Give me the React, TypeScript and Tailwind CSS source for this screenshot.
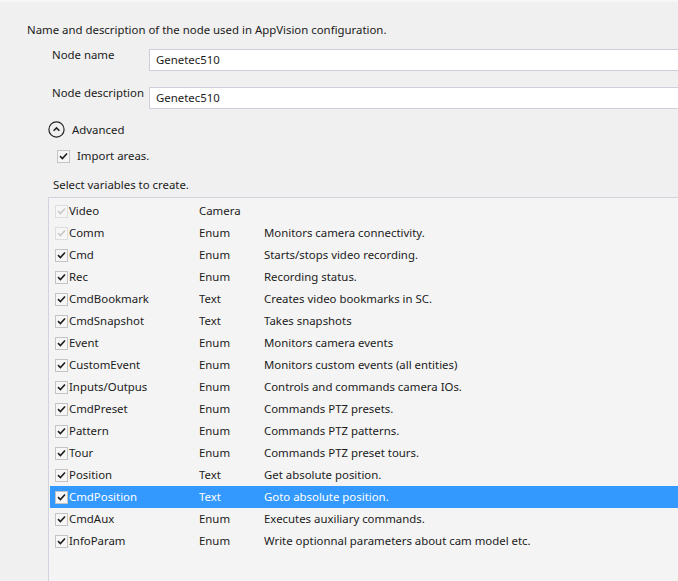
import React from "react";

type Variable = {
  name: string;
  type: string;
  description: string;
  locked?: boolean;
};

const variables: Variable[] = [
  { name: "Video", type: "Camera", description: "", locked: true },
  { name: "Comm", type: "Enum", description: "Monitors camera connectivity.", locked: true },
  { name: "Cmd", type: "Enum", description: "Starts/stops video recording." },
  { name: "Rec", type: "Enum", description: "Recording status." },
  { name: "CmdBookmark", type: "Text", description: "Creates video bookmarks in SC." },
  { name: "CmdSnapshot", type: "Text", description: "Takes snapshots" },
  { name: "Event", type: "Enum", description: "Monitors camera events" },
  { name: "CustomEvent", type: "Enum", description: "Monitors custom events (all entities)" },
  { name: "Inputs/Outpus", type: "Enum", description: "Controls and commands camera IOs." },
  { name: "CmdPreset", type: "Enum", description: "Commands PTZ presets." },
  { name: "Pattern", type: "Enum", description: "Commands PTZ patterns." },
  { name: "Tour", type: "Enum", description: "Commands PTZ preset tours." },
  { name: "Position", type: "Text", description: "Get absolute position." },
  { name: "CmdPosition", type: "Text", description: "Goto absolute position." },
  { name: "CmdAux", type: "Enum", description: "Executes auxiliary commands." },
  { name: "InfoParam", type: "Enum", description: "Write optionnal parameters about cam model etc." },
];

function CheckBox({ disabled }: { disabled?: boolean }) {
  return (
    <span
      className={
        disabled
          ? "flex h-[13px] w-[13px] shrink-0 items-center justify-center border border-[#dedede] bg-[#f6f6f6]"
          : "flex h-[13px] w-[13px] shrink-0 items-center justify-center border border-[#c4c4c4] bg-[#f6f6f6]"
      }
    >
      <svg width="9" height="8" viewBox="0 0 9 8" fill="none">
        <path
          d="M1 4.2 L3.4 6.5 L8 1.5"
          stroke={disabled ? "#c8c8c8" : "#1e1e1e"}
          strokeWidth="1.6"
        />
      </svg>
    </span>
  );
}

function AdvancedIcon() {
  return (
    <svg width="17" height="17" viewBox="0 0 17 17" fill="none">
      <circle cx="8.5" cy="8.5" r="7.6" stroke="#222" strokeWidth="1.2" />
      <path d="M5.6 9.8 L8.5 6.9 L11.4 9.8" stroke="#222" strokeWidth="1.6" />
    </svg>
  );
}

export default function App() {
  const selected = "CmdPosition";
  return (
    <div
      className="relative h-[581px] w-[678px] overflow-hidden whitespace-nowrap bg-[#f0f0f0] text-[11.4px] leading-[16px] text-[#1b1b1b]"
      style={{ fontFamily: '"Noto Sans", "Open Sans", sans-serif' }}
    >
      <div className="h-[2px] bg-[#f6f6f6]" />
      <div className="pl-[27px] pt-[20px]">
        Name and description of the node used in AppVision configuration.
      </div>

      <div className="mt-[9px] flex pl-[52px]">
        <div className="w-[97px] shrink-0">Node name</div>
        <div className="mt-[2px] flex h-[22px] w-[560px] shrink-0 items-center border border-[#cfcfdc] bg-white pl-[6px]">
          Genetec510
        </div>
      </div>
      <div className="mt-[14px] flex pl-[52px]">
        <div className="w-[97px] shrink-0">Node description</div>
        <div className="mt-[2px] flex h-[22px] w-[560px] shrink-0 items-center border border-[#cfcfdc] bg-white pl-[6px]">
          Genetec510
        </div>
      </div>

      <div className="mt-[12px] flex items-center pl-[48px]">
        <AdvancedIcon />
        <span className="ml-[7px]">Advanced</span>
      </div>

      <div className="mt-[10px] flex items-center pl-[57px]">
        <CheckBox />
        <span className="ml-[7px]">Import areas.</span>
      </div>

      <div className="mt-[13px] pl-[53px]">Select variables to create.</div>

      <div className="ml-[48px] mt-[4px] h-[400px] w-[700px] border border-[#d3d3de] bg-[#f4f4f4] pl-[1px] pt-[2px]">
        {variables.map((v) => {
          const isSel = v.name === selected;
          return (
            <div
              key={v.name}
              className={
                isSel
                  ? "flex h-[22px] items-center bg-[#3399ff] text-white"
                  : "flex h-[22px] items-center"
              }
            >
              <div className="flex w-[149px] shrink-0 items-center pl-[5px]">
                <CheckBox disabled={v.locked} />
                <span className="ml-[1px]">{v.name}</span>
              </div>
              <div className="w-[65px] shrink-0">{v.type}</div>
              <div>{v.description}</div>
            </div>
          );
        })}
      </div>
    </div>
  );
}
